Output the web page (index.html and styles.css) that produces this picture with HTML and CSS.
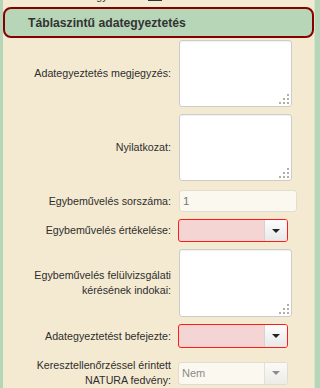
FILE: index.html
```html
<!DOCTYPE html>
<html lang="hu">
<head>
<meta charset="utf-8">
<title>Táblaszintű adategyeztetés</title>
<link rel="stylesheet" href="styles.css">
</head>
<body>
<div class="panel">
  <div class="prev">
    <span class="prev-label">Módosítás egyeztetve:</span>
    <span class="prev-box"></span>
  </div>
  <div class="header">Táblaszintű adategyeztetés</div>

  <div class="row r1">
    <div class="label">Adategyeztetés megjegyzés:</div>
    <div class="ta-wrap">
      <textarea class="ta"></textarea>
      <svg class="grip" width="10" height="10" viewBox="0 0 10 10"><g fill="#b3b0a2"><rect x="8" y="0" width="2" height="2"/><rect x="4" y="4" width="2" height="2"/><rect x="8" y="4" width="2" height="2"/><rect x="0" y="8" width="2" height="2"/><rect x="4" y="8" width="2" height="2"/><rect x="8" y="8" width="2" height="2"/></g></svg>
    </div>
  </div>

  <div class="row r2">
    <div class="label">Nyilatkozat:</div>
    <div class="ta-wrap">
      <textarea class="ta"></textarea>
      <svg class="grip" width="10" height="10" viewBox="0 0 10 10"><g fill="#b3b0a2"><rect x="8" y="0" width="2" height="2"/><rect x="4" y="4" width="2" height="2"/><rect x="8" y="4" width="2" height="2"/><rect x="0" y="8" width="2" height="2"/><rect x="4" y="8" width="2" height="2"/><rect x="8" y="8" width="2" height="2"/></g></svg>
    </div>
  </div>

  <div class="row r3">
    <div class="label">Egybeművelés sorszáma:</div>
    <div class="input">1</div>
  </div>

  <div class="row r4">
    <div class="label">Egybeművelés értékelése:</div>
    <div class="select invalid"><span class="val"></span><span class="btn"><span class="arrow"></span></span></div>
  </div>

  <div class="row r5">
    <div class="label">Egybeművelés felülvizsgálati<br>kérésének indokai:</div>
    <div class="ta-wrap">
      <textarea class="ta tall"></textarea>
      <svg class="grip" width="10" height="10" viewBox="0 0 10 10"><g fill="#b3b0a2"><rect x="8" y="0" width="2" height="2"/><rect x="4" y="4" width="2" height="2"/><rect x="8" y="4" width="2" height="2"/><rect x="0" y="8" width="2" height="2"/><rect x="4" y="8" width="2" height="2"/><rect x="8" y="8" width="2" height="2"/></g></svg>
    </div>
  </div>

  <div class="row r6">
    <div class="label">Adategyeztetést befejezte:</div>
    <div class="select invalid h24"><span class="val"></span><span class="btn"><span class="arrow"></span></span></div>
  </div>

  <div class="row r7">
    <div class="label">Keresztellenőrzéssel érintett<br>NATURA fedvény:</div>
    <div class="select disabled"><span class="val">Nem</span><span class="btn"><span class="arrow"></span></span></div>
  </div>

  <div class="next"></div>
</div>
</body>
</html>
```
FILE: styles.css
```css
html, body {
  margin: 0;
  padding: 0;
}
body {
  font-family: "Liberation Sans", Arial, sans-serif;
  background: #f4ead1;
  color: #333;
}
.panel {
  box-sizing: border-box;
  height: 388px;
  overflow: hidden;
  background: #f4ead1;
  border-left: 3px solid #b6d6b7;
  border-right: 5px solid #b6d6b7;
  box-shadow: inset -1px 0 0 #d9e2cf;
}
.prev {
  height: 7px;
  overflow: hidden;
  display: flex;
  align-items: flex-start;
}
.prev-label {
  width: 142px;
  text-align: right;
  margin-top: -11px;
  font-size: 10.7px;
  line-height: 15px;
  color: #333;
}
.prev-box {
  margin-left: 3px;
  width: 14px;
  height: 1px;
  background: #333;
}
.header {
  box-sizing: border-box;
  height: 31px;
  margin-right: 1px;
  display: flex;
  align-items: center;
  padding-left: 23px;
  background: #b6d6b7;
  border: 2px solid #860000;
  border-radius: 8px;
  font-size: 12.2px;
  font-weight: bold;
  color: #333;
}
.row {
  display: flex;
  align-items: center;
}
.label {
  flex: none;
  width: 168px;
  margin-right: 7px;
  text-align: right;
  font-size: 10.7px;
  line-height: 15px;
  color: #2e2e2e;
}
.r1 { margin-top: 2px; }
.r2 { margin-top: 7px; }
.r3 { margin-top: 9px; }
.r4 { margin-top: 7px; }
.r5 { margin-top: 7px; }
.r6 { margin-top: 7px; }
.r7 { margin-top: 10px; }

.ta-wrap {
  position: relative;
  margin-left: 1px;
  width: 113px;
}
.ta {
  display: block;
  box-sizing: border-box;
  width: 113px;
  height: 67px;
  margin: 0;
  padding: 3px;
  border: 1px solid #cccccc;
  border-radius: 3px;
  background: #fff;
  box-shadow: inset 0 1px 1px rgba(0,0,0,0.06);
  resize: none;
  outline: none;
  font-family: "Liberation Sans", Arial, sans-serif;
}
.ta.tall { height: 68px; }
.grip {
  position: absolute;
  right: 3px;
  bottom: 3px;
}
.input {
  box-sizing: border-box;
  margin-left: 1px;
  width: 118px;
  height: 22px;
  padding-left: 3px;
  display: flex;
  align-items: center;
  background: #fbf8f0;
  border: 1px solid #e2ddd0;
  border-radius: 3px;
  font-size: 11.5px;
  color: #777;
}
.select {
  box-sizing: border-box;
  width: 110px;
  height: 23px;
  display: flex;
  border-radius: 3px;
  overflow: hidden;
}
.select.h24 { height: 24px; }
.select .val {
  flex: 1;
  display: flex;
  align-items: center;
  padding-left: 3px;
  font-size: 11px;
}
.select .btn {
  flex: none;
  width: 22px;
  display: flex;
  align-items: center;
  justify-content: center;
  border-left: 1px solid #d3d3d3;
  background: linear-gradient(#fdfdfd, #e8e8e8);
}
.select .arrow {
  width: 0;
  height: 0;
  border-left: 4px solid transparent;
  border-right: 4px solid transparent;
  border-top: 4px solid #222;
}
.select.invalid {
  border: 1px solid #ff1a1a;
  background: #f5d5d3;
}
.select.disabled {
  border: 1px solid #e0dcd2;
  background: #fbf8f0;
  color: #8a8a8a;
}
.select.disabled .btn {
  border-left-color: #e3e0d8;
  background: linear-gradient(#fbfaf6, #ecebe6);
}
.select.disabled .arrow {
  border-top-color: #8c8c8c;
}
.next {
  box-sizing: border-box;
  margin-top: 5px;
  margin-left: 17px;
  width: 261px;
  height: 12px;
  background: #fff;
  border: 1px solid #dcdcdc;
}
```
